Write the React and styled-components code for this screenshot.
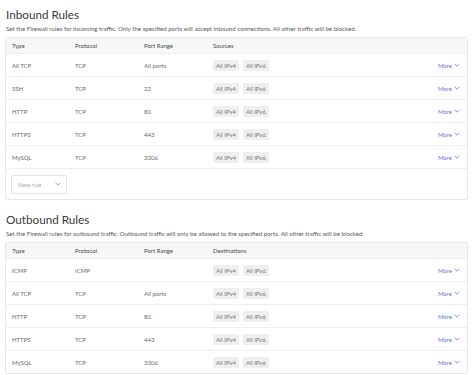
import React from "react";
import styled, { createGlobalStyle } from "styled-components";

const GlobalStyle = createGlobalStyle`
  html, body { margin: 0; padding: 0; background: #ffffff; }
  body { font-family: Lato, "Liberation Sans", Arial, sans-serif; color: #444; }
  * { box-sizing: border-box; }
`;

const Page = styled.div`
  display: flex;
  flex-direction: column;
  gap: 5px;
`;

const Section = styled.section`
  padding: 6px 6px 0 5px;
  display: flex;
  flex-direction: column;
`;

const Title = styled.h2`
  margin: 0 0 0 1px;
  font-size: 11.7px;
  line-height: 16px;
  font-weight: 400;
  color: #3a3a3a;
`;

const Desc = styled.p`
  margin: 3px 0 4px 1px;
  font-size: 6.15px;
  line-height: 8px;
  color: #5a5a5a;
`;

const Table = styled.div`
  border: 1px solid #e8e8e8;
  border-radius: 2px;
  display: flex;
  flex-direction: column;
`;

const Row = styled.div`
  display: grid;
  grid-template-columns: 63px 69px 69px 1fr auto;
  align-items: center;
  height: ${(p) => (p.$header ? "15px" : "23px")};
  background: ${(p) => (p.$header ? "#f7f7f7" : "transparent")};
  border-top: ${(p) => (p.$header ? "none" : "1px solid #eeeeee")};
  font-size: 6px;
  color: ${(p) => (p.$header ? "#4a4a4a" : "#6a6a6a")};
`;

const Cell = styled.div`
  padding-left: 6px;
  white-space: nowrap;
`;

const Chips = styled.div`
  display: flex;
  gap: 4px;
  padding-left: 6px;
`;

const Chip = styled.span`
  display: inline-flex;
  align-items: center;
  height: 11px;
  padding: 0 3px;
  background: #efefef;
  border-radius: 1px;
  color: #777;
  font-size: 5.9px;
`;

const More = styled.a`
  display: flex;
  align-items: center;
  gap: 2px;
  padding-right: 7px;
  color: #6477dd;
  font-size: 6px;
  cursor: pointer;
`;

const Footer = styled.div`
  height: 31px;
  border-top: 1px solid #eeeeee;
  display: flex;
  align-items: center;
  padding-left: 5px;
`;

const Select = styled.div`
  width: 56px;
  height: 19px;
  border: 1px solid #e3e3e3;
  border-radius: 2px;
  display: flex;
  align-items: center;
  justify-content: space-between;
  padding: 0 5px 0 6px;
  font-size: 5.9px;
  color: #aaa;
`;

const Chevron = ({ color = "#6477dd" }) => (
  <svg width="6" height="4" viewBox="0 0 6 4" fill="none">
    <path d="M0.6 0.8L3 3.2L5.4 0.8" stroke={color} strokeWidth="0.8" />
  </svg>
);

const inbound = [
  ["All TCP", "TCP", "All ports"],
  ["SSH", "TCP", "22"],
  ["HTTP", "TCP", "80"],
  ["HTTPS", "TCP", "443"],
  ["MySQL", "TCP", "3306"],
];

const outbound = [
  ["ICMP", "ICMP", ""],
  ["All TCP", "TCP", "All ports"],
  ["HTTP", "TCP", "80"],
  ["HTTPS", "TCP", "443"],
  ["MySQL", "TCP", "3306"],
];

const RulesTable = ({ rows, target, footer }) => (
  <Table>
    <Row $header>
      <Cell>Type</Cell>
      <Cell>Protocol</Cell>
      <Cell>Port Range</Cell>
      <Cell>{target}</Cell>
      <span />
    </Row>
    {rows.map((r, i) => (
      <Row key={i}>
        <Cell>{r[0]}</Cell>
        <Cell>{r[1]}</Cell>
        <Cell>{r[2]}</Cell>
        <Chips>
          <Chip>All IPv4</Chip>
          <Chip>All IPv6</Chip>
        </Chips>
        <More>
          More <Chevron />
        </More>
      </Row>
    ))}
    {footer && (
      <Footer>
        <Select>
          New rule <Chevron color="#888" />
        </Select>
      </Footer>
    )}
  </Table>
);

export default function App() {
  return (
    <>
      <GlobalStyle />
      <Page>
        <Section>
          <Title>Inbound Rules</Title>
          <Desc>
            Set the Firewall rules for incoming traffic. Only the specified ports will accept inbound connections. All other traffic will be blocked.
          </Desc>
          <RulesTable rows={inbound} target="Sources" footer />
        </Section>
        <Section>
          <Title>Outbound Rules</Title>
          <Desc>
            Set the Firewall rules for outbound traffic. Outbound traffic will only be allowed to the specified ports. All other traffic will be blocked.
          </Desc>
          <RulesTable rows={outbound} target="Destinations" />
        </Section>
      </Page>
    </>
  );
}
